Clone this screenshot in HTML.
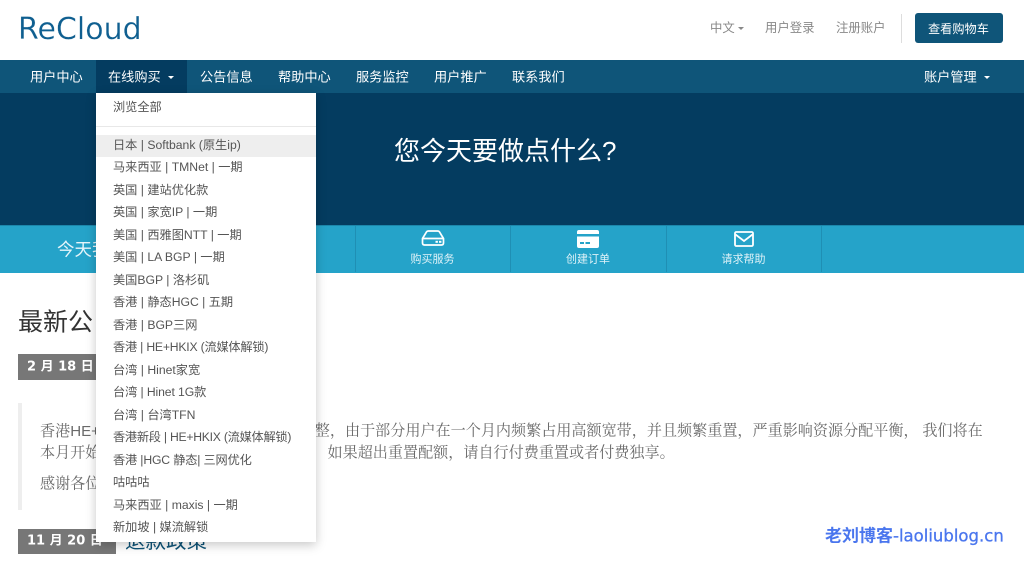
<!DOCTYPE html>
<html lang="zh-CN">
<head>
<meta charset="utf-8">
<title>ReCloud</title>
<style>
html,body{margin:0;padding:0;background:#fff;}
body{width:1024px;height:564px;overflow:hidden;position:relative;font-family:"Liberation Sans","Noto Sans CJK SC",sans-serif;}
.a{position:absolute;white-space:nowrap;}
.t{position:absolute;white-space:nowrap;transform:translateY(-50%);line-height:1;}
.nav{color:#fff;font-size:13.2px;top:77px;}
.top{color:#888;font-size:12.4px;top:28px;}
.item{color:#555;font-size:12.2px;left:113px;}
.lab{color:#dff2f8;font-size:11px;transform:translate(-50%,-50%);}
.q{font-family:"Liberation Serif","Noto Serif CJK SC",serif;color:#6a6a6a;font-size:15.1px;}
.q b{font-family:"Liberation Sans",sans-serif;font-weight:normal;}
.car{position:absolute;width:0;height:0;border-left:3.5px solid transparent;border-right:3.5px solid transparent;border-top:3.5px solid #fff;}
.div{position:absolute;top:226px;width:1px;height:46px;background:#1f8fb4;}
.badge{position:absolute;white-space:nowrap;transform:translateY(-50%);line-height:1;color:#fff;font-size:13px;font-weight:bold;font-family:"DejaVu Sans","Noto Sans CJK SC",sans-serif;}
</style>
</head>
<body>
<span class="t" style="left:18px;top:30px;font-size:30px;color:#0f5f90;font-family:'DejaVu Sans',sans-serif;-webkit-text-stroke:0.2px #fff;">ReCloud</span>

<span class="t top" style="left:710px;">中文</span>
<div class="car" style="left:738px;top:27px;border-top-color:#888;"></div>
<span class="t top" style="left:765px;">用户登录</span>
<span class="t top" style="left:836px;">注册账户</span>
<div class="a" style="left:901px;top:14px;width:1px;height:29px;background:#ddd;"></div>
<div class="a" style="left:915px;top:13px;width:88px;height:30px;background:#0f5579;border-radius:3px;"></div>
<span class="t" style="left:928px;top:29px;color:#fff;font-size:12.2px;">查看购物车</span>

<div class="a" style="left:0;top:60px;width:1024px;height:33px;background:#0f5579;"></div>
<div class="a" style="left:96px;top:60px;width:91px;height:33px;background:#043c60;"></div>
<span class="t nav" style="left:30px;">用户中心</span>
<span class="t nav" style="left:108px;">在线购买</span>
<div class="car" style="left:168px;top:76px;"></div>
<span class="t nav" style="left:200px;">公告信息</span>
<span class="t nav" style="left:278px;">帮助中心</span>
<span class="t nav" style="left:356px;">服务监控</span>
<span class="t nav" style="left:434px;">用户推广</span>
<span class="t nav" style="left:512px;">联系我们</span>
<span class="t nav" style="left:924px;">账户管理</span>
<div class="car" style="left:984px;top:76px;"></div>

<div class="a" style="left:0;top:93px;width:1024px;height:132px;background:#043c60;"></div>
<span class="t" style="left:394px;top:151px;color:#fff;font-size:26px;">您今天要做点什么?</span>

<div class="a" style="left:0;top:225px;width:1024px;height:48px;background:#25a3c9;border-top:1px solid #1c87ab;box-sizing:border-box;"></div>
<span class="t" style="left:57px;top:250px;color:#e6f5fa;font-size:17.500px;">今天我们能帮您什么</span>
<div class="div" style="left:355px;"></div>
<div class="div" style="left:510px;"></div>
<div class="div" style="left:666px;"></div>
<div class="div" style="left:821px;"></div>

<svg class="a" style="left:421px;top:230px;" width="24" height="16" viewBox="0 0 24 16">
<path d="M1.500 8.500 L5.500 2 Q6 1 7.500 1 H16.500 Q18 1 18.500 2 L22.500 8.500 V13 Q22.500 15 20.500 15 H3.500 Q1.500 15 1.500 13 Z M1.500 8.500 H22.500" fill="none" stroke="#fff" stroke-width="1.700"/>
<rect x="14.500" y="10.800" width="2.400" height="2" fill="#fff"/><rect x="18" y="10.800" width="2.400" height="2" fill="#fff"/>
</svg>
<svg class="a" style="left:577px;top:230px;" width="22" height="18" viewBox="0 0 22 18">
<path d="M2 0 H20 Q22 0 22 2 V4 H0 V2 Q0 0 2 0 Z" fill="#fff"/>
<path d="M0 6.500 H22 V16 Q22 18 20 18 H2 Q0 18 0 16 Z M3 12 V14 H7 V12 Z M8.500 12 V14 H13 V12 Z" fill="#fff" fill-rule="evenodd"/>
</svg>
<svg class="a" style="left:734px;top:231px;" width="20" height="16" viewBox="0 0 20 16">
<rect x="1" y="1" width="18" height="14" rx="1.200" fill="none" stroke="#fff" stroke-width="1.800"/>
<path d="M1.500 3.500 L10 10 L18.500 3.500" fill="none" stroke="#fff" stroke-width="1.800"/>
</svg>
<span class="t lab" style="left:432.500px;top:259.500px;">购买服务</span>
<span class="t lab" style="left:588px;top:259.500px;">创建订单</span>
<span class="t lab" style="left:743.500px;top:259.500px;">请求帮助</span>

<span class="t" style="left:18px;top:323px;font-size:25px;color:#333;">最新公</span>
<div class="a" style="left:18px;top:354px;width:96px;height:26px;background:#777;"></div>
<span class="badge" style="left:27px;top:367px;">2 月 18 日</span>

<div class="a" style="left:18px;top:403px;width:4px;height:107px;background:#eee;"></div>
<span class="t q" style="left:40px;top:432px;">香港<b>HE+</b></span>
<span class="t q" style="left:314.800px;top:432px;">整，由于部分用户在一个月内频繁占用高额宽带，并且频繁重置，严重影响资源分配平衡， 我们将在</span>
<span class="t q" style="left:40px;top:454px;">本月开始</span>
<span class="t q" style="left:327.500px;top:454px;">如果超出重置配额，请自行付费重置或者付费独享。</span>
<span class="t q" style="left:40px;top:485px;">感谢各位</span>

<div class="a" style="left:18px;top:529px;width:98px;height:25px;background:#777;"></div>
<span class="badge" style="left:27px;top:541px;">11 月 20 日</span>
<span class="t" style="left:125px;top:542px;color:#0f5579;font-size:20.500px;">退款政策</span>

<div class="a" style="left:96px;top:93px;width:220px;height:449px;background:#fff;box-shadow:0 3px 10px rgba(0,0,0,.22);">
  <div class="a" style="left:0;top:33px;width:220px;height:1px;background:#e8e8e8;"></div>
  <div class="a" style="left:0;top:42px;width:220px;height:22px;background:#eee;"></div>
</div>
<span class="t item" style="top:107px;">浏览全部</span>
<span class="t item" style="top:145px;">日本 | Softbank (原生ip)</span>
<span class="t item" style="top:167px;">马来西亚 | TMNet | 一期</span>
<span class="t item" style="top:190px;">英国 | 建站优化款</span>
<span class="t item" style="top:212px;">英国 | 家宽IP | 一期</span>
<span class="t item" style="top:235px;">美国 | 西雅图NTT | 一期</span>
<span class="t item" style="top:257px;">美国 | LA BGP | 一期</span>
<span class="t item" style="top:280px;">美国BGP | 洛杉矶</span>
<span class="t item" style="top:302px;">香港 | 静态HGC | 五期</span>
<span class="t item" style="top:325px;">香港 | BGP三网</span>
<span class="t item" style="top:347px;letter-spacing:-0.2px;">香港 | HE+HKIX (流媒体解锁)</span>
<span class="t item" style="top:370px;">台湾 | Hinet家宽</span>
<span class="t item" style="top:392px;letter-spacing:-0.1px;">台湾 | Hinet 1G款</span>
<span class="t item" style="top:415px;">台湾 | 台湾TFN</span>
<span class="t item" style="top:437px;letter-spacing:-0.25px;">香港新段 | HE+HKIX (流媒体解锁)</span>
<span class="t item" style="top:460px;letter-spacing:-0.15px;">香港 |HGC 静态| 三网优化</span>
<span class="t item" style="top:482px;">咕咕咕</span>
<span class="t item" style="top:505px;">马来西亚 | maxis | 一期</span>
<span class="t item" style="top:527px;">新加坡 | 媒流解锁</span>

<span class="t" style="left:825px;top:536px;color:#4a76ee;font-size:17px;font-weight:bold;">老刘博客<span style="font-family:'DejaVu Sans',sans-serif;font-size:16.500px;font-weight:normal;-webkit-text-stroke:0.3px #4a76ee;">-laoliublog.cn</span></span>
</body>
</html>
